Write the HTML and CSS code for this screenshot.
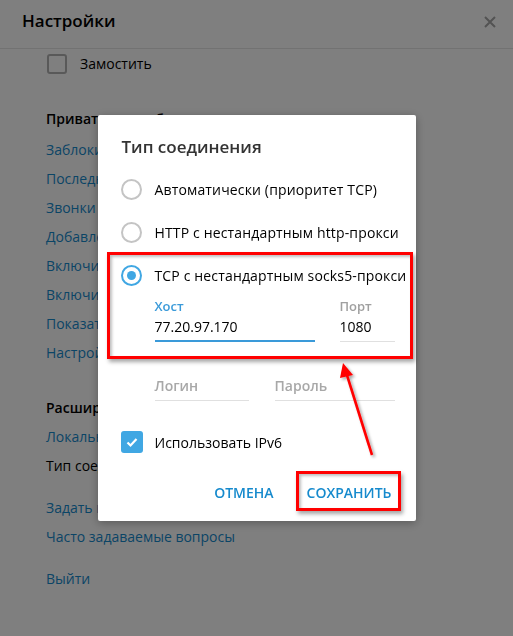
FILE: index.html
```html
<!DOCTYPE html>
<html>
<head>
<meta charset="utf-8">
<title>Настройки</title>
<link rel="stylesheet" href="styles.css">
</head>
<body>
  <div class="header">
    <span class="header-title">Настройки</span>
    <svg class="close" width="14" height="14" viewBox="0 0 14 14"><path d="M2 2L12 12M12 2L2 12" stroke="#a6a6a6" stroke-width="2"/></svg>
  </div>
  <div class="settings">
    <div class="row"><span class="box"></span>Замостить</div>

    <div class="section-title first">Приватность и безопасность</div>
    <div class="row link">Заблокированные пользователи</div>
    <div class="row link">Последняя активность</div>
    <div class="row link">Звонки</div>
    <div class="row link">Добавление в группы</div>
    <div class="row link">Включить локальный код-пароль</div>
    <div class="row link">Включить двухэтапную аутентификацию</div>
    <div class="row link">Показать все сеансы</div>
    <div class="row link">Настройки конфиденциальности</div>

    <div class="section-title">Расширенные настройки</div>
    <div class="row link">Локальное хранилище</div>
    <div class="row">Тип соединения</div>
    <div class="row link spaced">Задать вопрос</div>
    <div class="row link">Часто задаваемые вопросы</div>
    <div class="row link spaced">Выйти</div>
  </div>

  <div class="overlay">
    <div class="dialog">
      <div class="dialog-title">Тип соединения</div>
      <div class="option"><span class="radio"></span>Автоматически (приоритет TCP)</div>
      <div class="option"><span class="radio"></span>HTTP с нестандартным http-прокси</div>
      <div class="option"><span class="radio checked"></span>TCP с нестандартным socks5-прокси</div>

      <div class="fields">
        <div class="field host">
          <div class="label active">Хост</div>
          <div class="value">77.20.97.170</div>
        </div>
        <div class="field port">
          <div class="label">Порт</div>
          <div class="value">1080</div>
        </div>
      </div>
      <div class="fields creds">
        <div class="field login">
          <div class="label"></div>
          <div class="value placeholder">Логин</div>
        </div>
        <div class="field password">
          <div class="label"></div>
          <div class="value placeholder">Пароль</div>
        </div>
      </div>

      <div class="check-row">
        <span class="check">
          <svg width="14" height="14" viewBox="0 0 14 14"><path d="M2.5 7.5L5.5 10.5L11.5 4" fill="none" stroke="#fff" stroke-width="2.2"/></svg>
        </span>
        Использовать IPv6
      </div>

      <div class="buttons">
        <span class="btn">Отмена</span>
        <span class="btn">Сохранить</span>
      </div>
    </div>
  </div>

  <div class="mark mark-fields"></div>
  <div class="mark mark-save"></div>
  <svg class="arrow" width="60" height="110" viewBox="0 0 60 110">
    <defs>
      <filter id="sh" x="-50%" y="-50%" width="200%" height="200%">
        <feDropShadow dx="2" dy="2" stdDeviation="1.5" flood-color="#000" flood-opacity="0.35"/>
      </filter>
    </defs>
    <g filter="url(#sh)">
      <path d="M15 12L41 95" stroke="#f00" stroke-width="2.6"/>
      <path d="M12 3L22 15L9 18Z" fill="#f00"/>
    </g>
  </svg>
</body>
</html>
```
FILE: styles.css
```css
body {
  margin: 0;
  background: #fff;
  font-family: "Open Sans", "DejaVu Sans", sans-serif;
  font-size: 14px;
  color: #000;
}

.header {
  height: 49px;
  box-sizing: border-box;
  border-bottom: 1px solid #e4e4e4;
  padding: 8px 0 0 22px;
  display: flex;
  justify-content: space-between;
}

.header-title {
  font-size: 17px;
  font-weight: 600;
  line-height: 26px;
}

.close {
  margin: 7px 16px 0 0;
}

.settings {
  padding-left: 46px;
}

.row {
  height: 29px;
  line-height: 29px;
  display: flex;
  align-items: center;
  white-space: nowrap;
}

.row .box {
  width: 16px;
  height: 16px;
  border: 2px solid #b3b3b3;
  border-radius: 3px;
  margin: 0 13px 0 1px;
}

.link {
  color: #168acd;
}

.spaced {
  margin-top: 13px;
}

.section-title {
  margin-top: 26px;
  line-height: 29px;
  font-weight: 600;
}

.section-title.first {
  margin-bottom: 2px;
}

.overlay {
  position: fixed;
  inset: 0;
  background: rgba(0, 0, 0, 0.5);
  display: flex;
  align-items: center;
  justify-content: center;
}

.dialog {
  width: 318px;
  height: 406px;
  box-sizing: border-box;
  background: #fff;
  border-radius: 2px;
  box-shadow: 0 2px 10px rgba(0, 0, 0, 0.3);
  padding: 20px 0 0 23px;
}

.dialog-title {
  font-size: 17px;
  font-weight: 600;
  line-height: 24px;
  color: #333;
  padding-left: 1px;
  margin-bottom: 9px;
}

.option {
  height: 43px;
  display: flex;
  align-items: center;
  white-space: nowrap;
  letter-spacing: 0.15px;
}

.radio {
  width: 17px;
  height: 17px;
  border: 2px solid #c4c4c4;
  border-radius: 50%;
  margin-right: 13px;
  position: relative;
  flex: none;
}

.radio.checked {
  border-color: #40a7e3;
}

.radio.checked::after {
  content: "";
  position: absolute;
  left: 4px;
  top: 4px;
  width: 9px;
  height: 9px;
  border-radius: 50%;
  background: #40a7e3;
}

.fields {
  display: flex;
  gap: 25px;
  padding-left: 34px;
}

.field .label {
  height: 18px;
  line-height: 18px;
  font-size: 13px;
  font-weight: 600;
  color: #a0a0a0;
}

.field .label.active {
  color: #3a9ad9;
}

.field .value {
  line-height: 24px;
  font-size: 14px;
}

.host {
  width: 160px;
  padding-bottom: 1px;
  border-bottom: 2px solid #3a9ad9;
}

.port {
  width: 55px;
  padding-bottom: 2px;
  border-bottom: 1px solid #e0e0e0;
}

.creds {
  margin-top: 14px;
  gap: 26px;
}

.creds .field {
  padding-bottom: 2px;
  border-bottom: 1px solid #e0e0e0;
}

.login {
  width: 94px;
}

.password {
  width: 120px;
}

.value.placeholder {
  font-size: 14px;
  font-weight: 600;
  color: #a8a8a8;
}

.check-row {
  margin-top: 26px;
  height: 30px;
  display: flex;
  align-items: center;
}

.check {
  width: 22px;
  height: 22px;
  border-radius: 3px;
  background: #40a7e3;
  margin: 0 12px 0 0;
  display: flex;
  align-items: center;
  justify-content: center;
}

.buttons {
  margin-top: 20px;
  height: 30px;
  display: flex;
  justify-content: flex-end;
  align-items: center;
  gap: 33px;
  padding-right: 24px;
}

.btn {
  text-transform: uppercase;
  font-size: 14px;
  font-weight: 600;
  color: #168acd;
}

.mark {
  position: absolute;
  border: 3px solid #f00;
  box-shadow: 2px 3px 4px rgba(0, 0, 0, 0.35), inset 2px 2px 3px rgba(0, 0, 0, 0.25);
}

.mark-fields {
  left: 107px;
  top: 252px;
  width: 300px;
  height: 101px;
}

.mark-save {
  left: 296px;
  top: 471px;
  width: 99px;
  height: 34px;
}

.arrow {
  position: absolute;
  left: 331px;
  top: 360px;
}
```
